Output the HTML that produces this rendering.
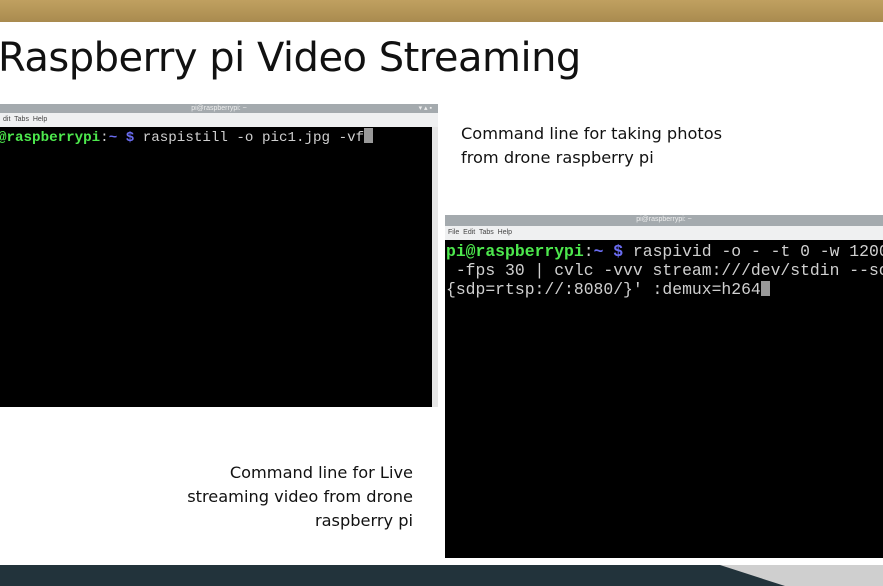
<!DOCTYPE html>
<html><head><style>
body{margin:0;width:883px;height:586px;position:relative;overflow:hidden;background:#fff;font-family:"Liberation Sans",sans-serif}
.a{position:absolute}
.mono{font-family:"Liberation Mono","DejaVu Sans Mono",monospace;color:#d0d0d0;white-space:pre;line-height:19px}
.g{color:#4de84d;font-weight:bold}.b{color:#6a6cf0;font-weight:bold}
.cur{display:inline-block;width:9px;height:15px;background:#999;vertical-align:-2px}
.tb{background:#a4aaae;color:#eee;font-size:7px;text-align:center;line-height:10px}
.mn{background:#eff0f1;color:#444;font-size:7px;line-height:14px;padding-left:3px}
.cap{font-family:"DejaVu Sans",sans-serif;font-size:16.2px;color:#111;line-height:24px}
</style></head><body>
<div class="a" style="left:0;top:0;width:883px;height:22px;background:linear-gradient(#c0a060,#a98b4f)"></div>
<div class="a" style="left:-2px;top:35px;font-size:40px;color:#111;font-family:'DejaVu Sans',sans-serif;letter-spacing:-0.5px">Raspberry pi Video Streaming</div>

<div class="a tb" style="left:0;top:104px;width:438px;height:9px">pi@raspberrypi: ~<span style="position:absolute;right:6px">▾ ▴ ▪</span></div>
<div class="a mn" style="left:0;top:113px;width:435px;height:14px">dit&nbsp; Tabs&nbsp; Help</div>
<div class="a" style="left:0;top:127px;width:432px;height:280px;background:#000"></div>
<div class="a" style="left:432px;top:127px;width:6px;height:280px;background:#e6e6e6"></div>
<div class="a mono" style="left:-2px;top:128px;font-size:14.2px"><span class="g">@raspberrypi</span>:<span class="b">~ $</span> raspistill -o pic1.jpg -vf<span class="cur"></span></div>

<div class="a cap" style="left:461px;top:122px">Command line for taking photos<br>from drone raspberry pi</div>

<div class="a tb" style="left:445px;top:215px;width:438px;height:11px">pi@raspberrypi: ~</div>
<div class="a mn" style="left:445px;top:226px;width:435px;height:14px">File&nbsp; Edit&nbsp; Tabs&nbsp; Help</div>
<div class="a" style="left:445px;top:240px;width:438px;height:318px;background:#000"></div>
<div class="a mono" style="left:446px;top:242px;font-size:16.4px"><span class="g">pi@raspberrypi</span>:<span class="b">~ $</span> raspivid -o - -t 0 -w 1200
 -fps 30 | cvlc -vvv stream:///dev/stdin --so
{sdp=rtsp://:8080/}' :demux=h264<span class="cur"></span></div>

<div class="a cap" style="left:100px;top:461px;width:313px;text-align:right">Command line for Live<br>streaming video from drone<br>raspberry pi</div>

<div class="a" style="left:0;top:565px;width:883px;height:21px;background:#22333b"></div>
<svg class="a" style="left:0;top:565px" width="883" height="21"><polygon points="720,0 883,0 883,21 785,21" fill="#cfcfcf"/></svg>
</body></html>
